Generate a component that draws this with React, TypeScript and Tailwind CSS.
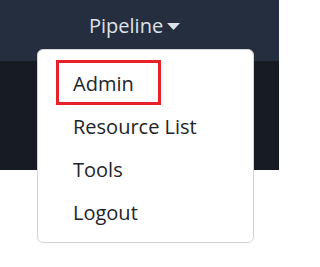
import React from 'react';

const items = ['Resource List', 'Tools', 'Logout'];

const App: React.FC = () => {
    return (
        <div className="relative w-[279px] h-[267px] overflow-hidden bg-white" style={{ fontFamily: '"Open Sans", "Noto Sans", sans-serif' }}>
            <div className="h-[61px] bg-[#252e3e] flex pl-[89px] pt-[10px]">
                <div className="flex items-center h-[32px] text-[20px] text-[#dde2e8]">
                    <span>Pipeline</span>
                    <svg width="13" height="7" viewBox="0 0 13 7" className="ml-[4px] shrink-0">
                        <polygon points="0,0 13,0 6.5,7" fill="#dde2e8" />
                    </svg>
                </div>
            </div>
            <div className="h-[109px] bg-[#171c24]" />

            <div className="absolute left-[37px] top-[49px] w-[217px] h-[194px] bg-white border border-[#d4d4d4] rounded-[6px] pt-[10px] text-[20px] text-[#212529]">
                <div className="ml-[18px] w-[105px] h-[45px] border-[3px] border-[#e8202a] flex items-center pl-[14px] pt-[2px]">
                    Admin
                </div>
                {items.map((label) => (
                    <div key={label} className="h-[43px] flex items-center pl-[35px]">
                        {label}
                    </div>
                ))}
            </div>
        </div>
    );
};

export default App;
